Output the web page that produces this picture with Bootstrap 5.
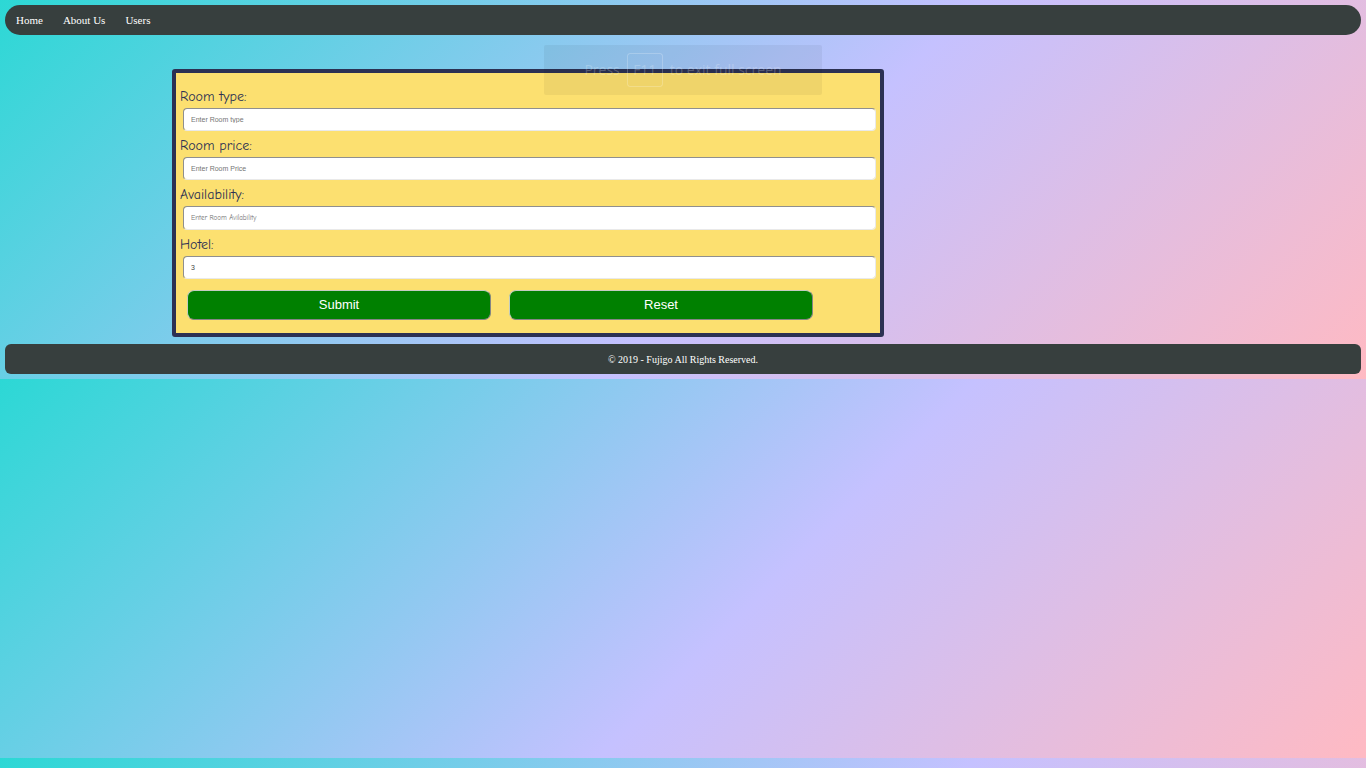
<!DOCTYPE html>
<html lang="en">
<head>
<meta charset="utf-8">
<meta name="viewport" content="width=device-width, initial-scale=1">
<title>Fujigo - Room</title>
<link href="https://cdn.jsdelivr.net/npm/bootstrap@5.3.0/dist/css/bootstrap.min.css" rel="stylesheet">
<style>
body { background: linear-gradient(-225deg, #2cd8d5 0%, #c5c1ff 56%, #ffbac3 100%); padding: 5px; font-family: "Liberation Serif", serif; }
.top-bar, .bottom-bar { background: #373f3e; height: 30px; color: #fff; }
.top-bar { border-radius: 15px; padding: 0 11px; gap: 20px; font-size: 11px; }
.bottom-bar { border-radius: 6px; font-size: 10px; margin-top: 7px; }
.room-form { max-width: 712px; margin: 34px 0 0 167px; padding: 9px 4px 13px; background: #fce070; border: 4px solid #2c3153; border-radius: 3px; }
.room-form label { display: block; padding-top: 4px; line-height: 22px; font-family: "Comic Neue", "Comic Sans MS", "Open Sans", sans-serif; font-size: 14px; color: #2c3153; }
.room-form .form-control { width: auto; min-width: calc(100% - 3px); margin-left: 3px; height: 23px; padding: 0 7px; border: 1px solid; border-color: #8f8f8f #e9e9e9 #e9e9e9 #8f8f8f; border-radius: 4px; font-family: "Liberation Sans", sans-serif; font-size: 7px; color: #444; }
.room-form .form-control::placeholder { color: #757575; opacity: 1; }
.room-form .form-control.casual { font-family: "Comic Neue", "Comic Sans MS", "Open Sans", sans-serif; }
.room-form .form-control.taller { height: 24px; }
.actions { gap: 18px; margin: 11px 0 0 7px; padding-right: 63px; }
.actions .btn { background: #008000; color: #fff; height: 30px; padding: 0; border: 1px solid; border-color: #c4ccc0 #858585 #858585 #c4ccc0; border-radius: 7px; font-family: "Liberation Sans", sans-serif; font-size: 13px; line-height: 28px; }
.exit-hint { top: 45px; width: 278px; height: 50px; background: rgba(0,0,0,.05); border-radius: 2px; gap: 7px; color: rgba(255,255,255,.22); font-family: "Open Sans", sans-serif; font-size: 14px; line-height: 18px; pointer-events: none; }
.key-cap { border: 1px solid rgba(255,255,255,.22); border-radius: 3px; width: 36px; height: 34px; line-height: 31px; }
</style>
</head>
<body>
<nav class="top-bar d-flex align-items-center">
  <a class="text-white text-decoration-none" href="#">Home</a>
  <a class="text-white text-decoration-none" href="#">About Us</a>
  <a class="text-white text-decoration-none" href="#">Users</a>
</nav>
<main>
  <form class="room-form">
    <label for="type">Room type:</label>
    <input class="form-control" id="type" type="text" placeholder="Enter Room type">
    <label for="price">Room price:</label>
    <input class="form-control" id="price" type="text" placeholder="Enter Room Price">
    <label for="availability">Availability:</label>
    <input class="form-control casual taller" id="availability" type="text" placeholder="Enter Room Avilability">
    <label for="hotel">Hotel:</label>
    <input class="form-control" id="hotel" type="text" value="3">
    <div class="actions d-flex">
      <button class="btn flex-fill w-50" type="submit">Submit</button>
      <button class="btn flex-fill w-50" type="reset">Reset</button>
    </div>
  </form>
</main>
<footer class="bottom-bar d-flex align-items-center justify-content-center">© 2019 - Fujigo All Rights Reserved.</footer>
<div class="exit-hint position-absolute start-50 translate-middle-x d-flex align-items-center justify-content-center">
  <span>Press</span><span class="key-cap text-center">F11</span><span>to exit full screen</span>
</div>
<script src="https://cdn.jsdelivr.net/npm/bootstrap@5.3.0/dist/js/bootstrap.bundle.min.js"></script>
</body>
</html>
